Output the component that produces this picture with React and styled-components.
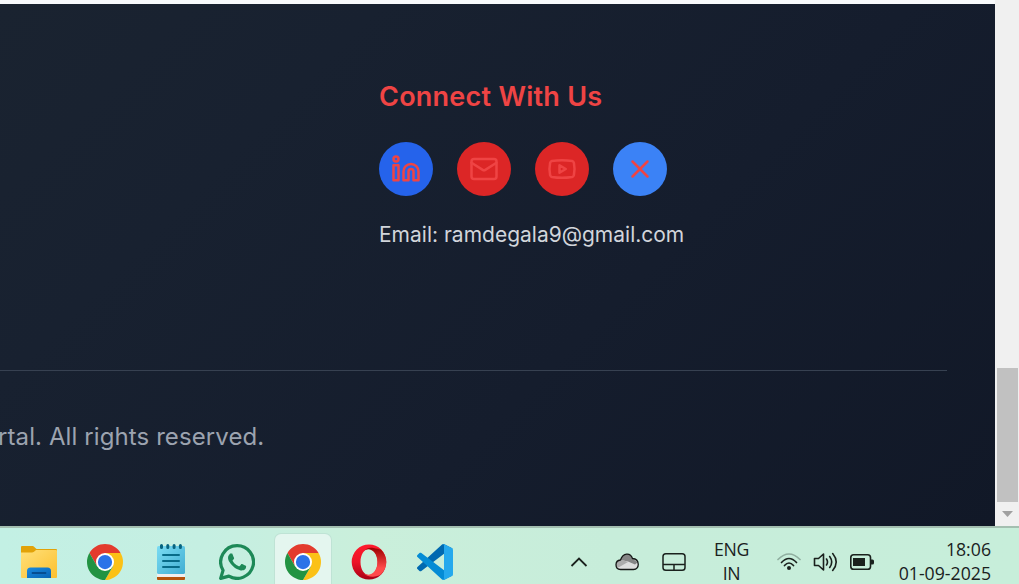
import React from "react";
import styled, { createGlobalStyle } from "styled-components";

const GlobalStyle = createGlobalStyle`
  * { box-sizing: border-box; }
  body { margin: 0; overflow: hidden; }
  h3, p { margin: 0; }
  svg { display: block; flex: none; }
`;

const Screen = styled.div`
  width: 1019px;
  height: 584px;
  display: flex;
  flex-direction: column;
  overflow: hidden;
`;

const BrowserView = styled.div`
  height: 526px;
  display: flex;
`;

const Page = styled.div`
  width: 995px;
  display: flex;
  flex-direction: column;
  background: #f8fafc;
  padding-top: 4px;
`;

const Footer = styled.footer`
  flex: 1;
  display: flex;
  flex-direction: column;
  padding-right: 48px;
  background: linear-gradient(135deg, #1a2330 0%, #182130 25%, #151d2d 60%, #111827 100%);
  font-family: Inter, "Liberation Sans", sans-serif;
`;

const Connect = styled.section`
  height: 366px;
  padding: 76px 0 0 379px;
`;

const Heading = styled.h3`
  font-size: 27px;
  line-height: 34px;
  font-weight: 600;
  letter-spacing: 0.25px;
  color: #ef4444;
  white-space: nowrap;
`;

const Socials = styled.div`
  display: flex;
  gap: 24px;
  margin-top: 28px;
`;

const SocialLink = styled.a`
  width: 54px;
  height: 54px;
  border-radius: 50%;
  display: flex;
  align-items: center;
  justify-content: center;
  color: #ef4444;
  background: ${(p) => p.$color};
`;

const Email = styled.p`
  margin-top: 24px;
  font-size: 21px;
  line-height: 30px;
  color: #d1d5db;
  white-space: nowrap;
`;

const Legal = styled.div`
  border-top: 1px solid #374151;
  padding-top: 48px;
`;

const Copyright = styled.p`
  font-size: 24px;
  line-height: 36px;
  color: #9ca3af;
  white-space: nowrap;
  letter-spacing: 0.1px;
  margin-left: -2px;
`;

const Scrollbar = styled.div`
  width: 24px;
  background: #f0f0f0;
  display: flex;
  flex-direction: column;
  justify-content: flex-end;
  padding: 0 1px 0 2px;
`;

const Thumb = styled.div`
  height: 134px;
  background: #c1c1c1;
`;

const ScrollDown = styled.div`
  height: 24px;
  padding: 9px 0 0 5px;
`;

const Taskbar = styled.div`
  height: 58px;
  border-top: 2px solid #a3bfb0;
  background: linear-gradient(90deg, #c3f0e4 0%, #c5efe2 20%, #caefdb 36%, #c7edda 60%, #c7eeda 100%);
  display: flex;
  justify-content: space-between;
  font-family: "Open Sans", "Noto Sans", sans-serif;
`;

const Apps = styled.div`
  display: flex;
  gap: 10px;
  padding: 6px 0 0 11px;
`;

const AppButton = styled.div`
  width: 56px;
  height: 56px;
  border-radius: 6px;
  display: flex;
  align-items: center;
  justify-content: center;
  background: ${(p) => (p.$active ? "#e4f6ef" : "transparent")};
  box-shadow: ${(p) => (p.$active ? "0 0 0 1px #bfe3d5" : "none")};
`;

const Tray = styled.div`
  display: flex;
  padding-right: 28px;
  color: #1a211d;
`;

const TrayIcon = styled.div`
  width: ${(p) => p.$width}px;
  height: 68px;
  display: flex;
  align-items: center;
  justify-content: center;
`;

const TrayText = styled.div`
  width: ${(p) => p.$width}px;
  padding-top: 10px;
  text-align: ${(p) => p.$align};
  font-size: 17.7px;
  line-height: 23.5px;
  letter-spacing: ${(p) => p.$spacing}px;
  white-space: nowrap;
`;

const Outline = ({ children }) => (
  <svg width="30" height="30" viewBox="0 0 24 24" fill="none" stroke="currentColor" strokeWidth="2" strokeLinecap="round" strokeLinejoin="round">
    {children}
  </svg>
);

const FolderIcon = () => (
  <svg width="36" height="36" viewBox="0 0 36 36">
    <defs>
      <linearGradient id="folder" x1="0" y1="0" x2="1" y2="1">
        <stop offset="0" stopColor="#ffe07a" />
        <stop offset="1" stopColor="#fcc02e" />
      </linearGradient>
      <linearGradient id="pocket" x1="0" y1="0" x2="1" y2="1">
        <stop offset="0" stopColor="#1a8ade" />
        <stop offset="1" stopColor="#0864b4" />
      </linearGradient>
    </defs>
    <path d="M0 3q0-1 1-1h10.500q1 0 1.800 1L15.500 5H35q1 0 1 1v6H0z" fill="#e2a208" />
    <path d="M0 8.500h11q1 0 2-.8L15 6h20q1 0 1 1v26q0 1-1 1H1q-1 0-1-1z" fill="url(#folder)" />
    <path d="M6 34v-7q0-3.500 3.500-3.500h17q3.500 0 3.500 3.500v7z" fill="url(#pocket)" />
    <path d="M11.500 29h13" stroke="#064e91" strokeWidth="1.8" strokeLinecap="round" />
  </svg>
);

const ChromeIcon = () => (
  <svg width="36" height="36" viewBox="0 0 48 48">
    <path d="M24 12H44.780A24 24 0 0 0 3.220 12L13.610 30z" fill="#e33b2e" />
    <path d="M34.390 30L24 48A24 24 0 0 0 44.780 12H24z" fill="#fbc116" />
    <path d="M13.610 30L3.220 12A24 24 0 0 0 24 48L34.390 30z" fill="#229342" />
    <circle cx="24" cy="24" r="12" fill="#fff" />
    <circle cx="24" cy="24" r="9.500" fill="#2b73e8" />
  </svg>
);

const NotepadIcon = () => (
  <svg width="28" height="36" viewBox="0 0 28 36">
    <defs>
      <linearGradient id="note" x1="0" y1="0" x2="1" y2="1">
        <stop offset="0" stopColor="#7bdcf3" />
        <stop offset="1" stopColor="#41aed2" />
      </linearGradient>
    </defs>
    <path d="M0 31h28v4q0 1-1 1H1q-1 0-1-1z" fill="#b5530b" />
    <path d="M0 28h28v5H0z" fill="#f1efed" />
    <rect y="2" width="28" height="28" rx="1.500" fill="url(#note)" />
    <path d="M4.500 1.500v2m6.300-2v2m6.300-2v2m6.300-2v2" stroke="#07637f" strokeWidth="3" strokeLinecap="round" />
    <path d="M6 11h16M6 17h16M6 23h16" stroke="#086b88" strokeWidth="2" strokeLinecap="round" />
  </svg>
);

const WhatsAppIcon = () => (
  <svg width="36" height="36" viewBox="0 0 24 24" fill="#1d8957">
    <path d="M17.472 14.382c-.297-.149-1.758-.867-2.030-.967-.273-.099-.471-.148-.670.150-.197.297-.767.966-.940 1.164-.173.199-.347.223-.644.075-.297-.150-1.255-.463-2.390-1.475-.883-.788-1.480-1.761-1.653-2.059-.173-.297-.018-.458.130-.606.134-.133.298-.347.446-.520.149-.174.198-.298.298-.497.099-.198.050-.371-.025-.520-.075-.149-.669-1.612-.916-2.207-.242-.579-.487-.500-.669-.510-.173-.008-.371-.010-.570-.010-.198 0-.520.074-.792.372-.272.297-1.040 1.016-1.040 2.479 0 1.462 1.065 2.875 1.213 3.074.149.198 2.096 3.200 5.077 4.487.709.306 1.262.489 1.694.625.712.227 1.360.195 1.871.118.571-.085 1.758-.719 2.006-1.413.248-.694.248-1.289.173-1.413-.074-.124-.272-.198-.570-.347" />
    <path d="M12 1.100A10.900 10.900 0 0 0 2.700 17.600L1.100 22.900L6.600 21.400A10.900 10.900 0 1 0 12 1.100z" fill="none" stroke="#1d8957" strokeWidth="2.150" strokeLinejoin="round" />
  </svg>
);

const OperaIcon = () => (
  <svg width="36" height="36" viewBox="0 0 36 36">
    <defs>
      <linearGradient id="operaLeft" x1="0" y1="0" x2="0" y2="1">
        <stop offset="0" stopColor="#ff1b2d" />
        <stop offset=".5" stopColor="#ed1427" />
        <stop offset="1" stopColor="#a70014" />
      </linearGradient>
      <linearGradient id="operaRight" x1="0" y1="0" x2="0" y2="1">
        <stop offset="0" stopColor="#9c0000" />
        <stop offset=".7" stopColor="#ff4b4b" />
      </linearGradient>
    </defs>
    <path fillRule="evenodd" d="M18 .5a17.300 17.500 0 1 0 0 35a17.300 17.500 0 1 0 0-35zM18 5c5 0 8.500 5.800 8.500 13S23 31 18 31S9.500 25.200 9.500 18S13 5 18 5z" fill="url(#operaLeft)" />
    <path d="M12 7.500C15 4 19 3 22.500 4C25.500 4.500 28 5 29.800 5.500C37 12 37 24 29.800 30.500C25 33.500 16.500 34 12 28.500C18 34 26.500 28.500 26.500 18S18 2 12 7.500z" fill="url(#operaRight)" />
  </svg>
);

const VSCodeIcon = () => (
  <svg width="36" height="36" viewBox="0 0 100 100">
    <path d="M96.461 10.796L75.857.876c-2.385-1.149-5.235-.664-7.107 1.208L1.299 63.583c-1.814 1.654-1.812 4.511.004 6.162l5.510 5.009c1.485 1.350 3.722 1.450 5.321.236L93.361 13.370C96.086 11.302 100 13.246 100 16.667v-.240c0-2.401-1.375-4.590-3.539-5.632z" fill="#0069b0" />
    <path d="M96.461 89.204L75.857 99.125c-2.385 1.148-5.235.664-7.107-1.208L1.299 36.417c-1.814-1.654-1.812-4.511.004-6.162L6.813 25.246c1.485-1.350 3.722-1.450 5.321-.236L93.361 86.631C96.086 88.698 100 86.754 100 83.333v.240c0 2.401-1.375 4.590-3.539 5.632z" fill="#058cd5" />
    <path d="M75.858 99.126c-2.386 1.148-5.236.662-7.108-1.210 2.306 2.306 6.250.673 6.250-2.589V4.672c0-3.262-3.944-4.895-6.250-2.589 1.872-1.872 4.722-2.357 7.108-1.210l20.601 9.907C98.623 11.822 100 14.011 100 16.413v67.174c0 2.402-1.377 4.591-3.541 5.633z" fill="#25a9ed" />
  </svg>
);

const App = () => (
  <Screen>
    <GlobalStyle />
    <BrowserView>
      <Page>
        <Footer>
          <Connect>
            <Heading>Connect With Us</Heading>
            <Socials>
              <SocialLink $color="#2563eb">
                <Outline>
                  <path d="M16 8a6 6 0 0 1 6 6v7h-4v-7a2 2 0 0 0-2-2 2 2 0 0 0-2 2v7h-4v-7a6 6 0 0 1 6-6z" />
                  <rect width="4" height="12" x="2" y="9" />
                  <circle cx="4" cy="4" r="2" />
                </Outline>
              </SocialLink>
              <SocialLink $color="#dc2626">
                <Outline>
                  <rect width="20" height="16" x="2" y="4" rx="2" />
                  <path d="m22 7-8.970 5.700a1.940 1.940 0 0 1-2.060 0L2 7" />
                </Outline>
              </SocialLink>
              <SocialLink $color="#dc2626">
                <Outline>
                  <path d="M2.500 17a24.120 24.120 0 0 1 0-10 2 2 0 0 1 1.400-1.400 49.560 49.560 0 0 1 16.200 0A2 2 0 0 1 21.500 7a24.120 24.120 0 0 1 0 10 2 2 0 0 1-1.400 1.400 49.550 49.550 0 0 1-16.200 0A2 2 0 0 1 2.500 17" />
                  <path d="m10 15 5-3-5-3z" />
                </Outline>
              </SocialLink>
              <SocialLink $color="#3b82f6">
                <Outline>
                  <path d="M18 6 6 18M6 6l12 12" />
                </Outline>
              </SocialLink>
            </Socials>
            <Email>Email: ramdegala9@gmail.com</Email>
          </Connect>
          <Legal>
            <Copyright>rtal. All rights reserved.</Copyright>
          </Legal>
        </Footer>
      </Page>
      <Scrollbar>
        <Thumb />
        <ScrollDown>
          <svg width="11" height="6" viewBox="0 0 11 6">
            <path d="M0 0h11L5.500 6z" fill="#a0a0a0" />
          </svg>
        </ScrollDown>
      </Scrollbar>
    </BrowserView>
    <Taskbar>
      <Apps>
        <AppButton><FolderIcon /></AppButton>
        <AppButton><ChromeIcon /></AppButton>
        <AppButton><NotepadIcon /></AppButton>
        <AppButton><WhatsAppIcon /></AppButton>
        <AppButton $active><ChromeIcon /></AppButton>
        <AppButton><OperaIcon /></AppButton>
        <AppButton><VSCodeIcon /></AppButton>
      </Apps>
      <Tray>
        <TrayIcon $width={48}>
          <svg width="18" height="10" viewBox="0 0 18 10" fill="none" stroke="currentColor" strokeWidth="1.800">
            <path d="M1.500 9L9 1.500L16.500 9" />
          </svg>
        </TrayIcon>
        <TrayIcon $width={48}>
          <svg width="24" height="18" viewBox="0 0 24 18">
            <path d="M5.500 16.500C-.5 16.300-.5 7.500 5.500 7C8-.5 15.500-.5 17.500 5.500C25 6 25 16.500 18.500 16.500z" fill="#dedede" />
            <path d="M5.500 7C8-.5 15.500-.5 17.500 5.500L22.500 9.500L20 11.500L13 8.500L5.500 7z" fill="#858585" />
            <path d="M1 13C1 9 3 7 5.500 7C8 6.500 10 8 13 9L3.500 14.500z" fill="#acacac" />
            <path d="M5.500 16.500C-.5 16.300-.5 7.500 5.500 7C8-.5 15.500-.5 17.500 5.500C25 6 25 16.500 18.500 16.500z" fill="none" stroke="#151816" strokeWidth="1.300" />
          </svg>
        </TrayIcon>
        <TrayIcon $width={46}>
          <svg width="24" height="18" viewBox="0 0 24 18" fill="none" stroke="currentColor" strokeWidth="1.500">
            <rect x="1" y=".8" width="22" height="16.400" rx="2.800" />
            <path d="M1 11.500h22M12 11.500v5.500" />
          </svg>
        </TrayIcon>
        <TrayText $width={69} $align="center" $spacing={-0.4}>ENG<br />IN</TrayText>
        <TrayIcon $width={46}>
          <svg width="24" height="18" viewBox="0 0 24 18" fill="none" stroke="currentColor" strokeWidth="1.700" strokeLinecap="round">
            <path d="M1 6.500Q12-4.500 23 6.500" stroke="#8fae9f" />
            <path d="M4.500 9.500Q12 1.500 19.500 9.500M7.500 12.500Q12 7.500 16.500 12.500" />
            <circle cx="12" cy="15" r="2" fill="currentColor" stroke="none" />
          </svg>
        </TrayIcon>
        <TrayIcon $width={27}>
          <svg width="26" height="20" viewBox="0 0 26 20" fill="none" stroke="currentColor" strokeWidth="1.600" strokeLinecap="round" strokeLinejoin="round">
            <path d="M1.500 6.500h4L10.500 2v16l-5-4.500h-4z" />
            <path d="M13.500 7q2 3 0 6M16.700 4.500q4 5.500 0 11M19.700 1.500q7 8.500 0 17" />
          </svg>
        </TrayIcon>
        <TrayIcon $width={45}>
          <svg width="24" height="16" viewBox="0 0 24 16">
            <rect x=".8" y=".8" width="19.700" height="14.400" rx="2.800" fill="none" stroke="currentColor" strokeWidth="1.600" />
            <rect x="3" y="4" width="12" height="8" fill="currentColor" />
            <path d="M21 5.500h1.500q1.500 0 1.500 1.500v2q0 1.500-1.500 1.500H21z" fill="currentColor" />
          </svg>
        </TrayIcon>
        <TrayText $width={107} $align="right" $spacing={0}>18:06<br />01-09-2025</TrayText>
      </Tray>
    </Taskbar>
  </Screen>
);

export default App;
